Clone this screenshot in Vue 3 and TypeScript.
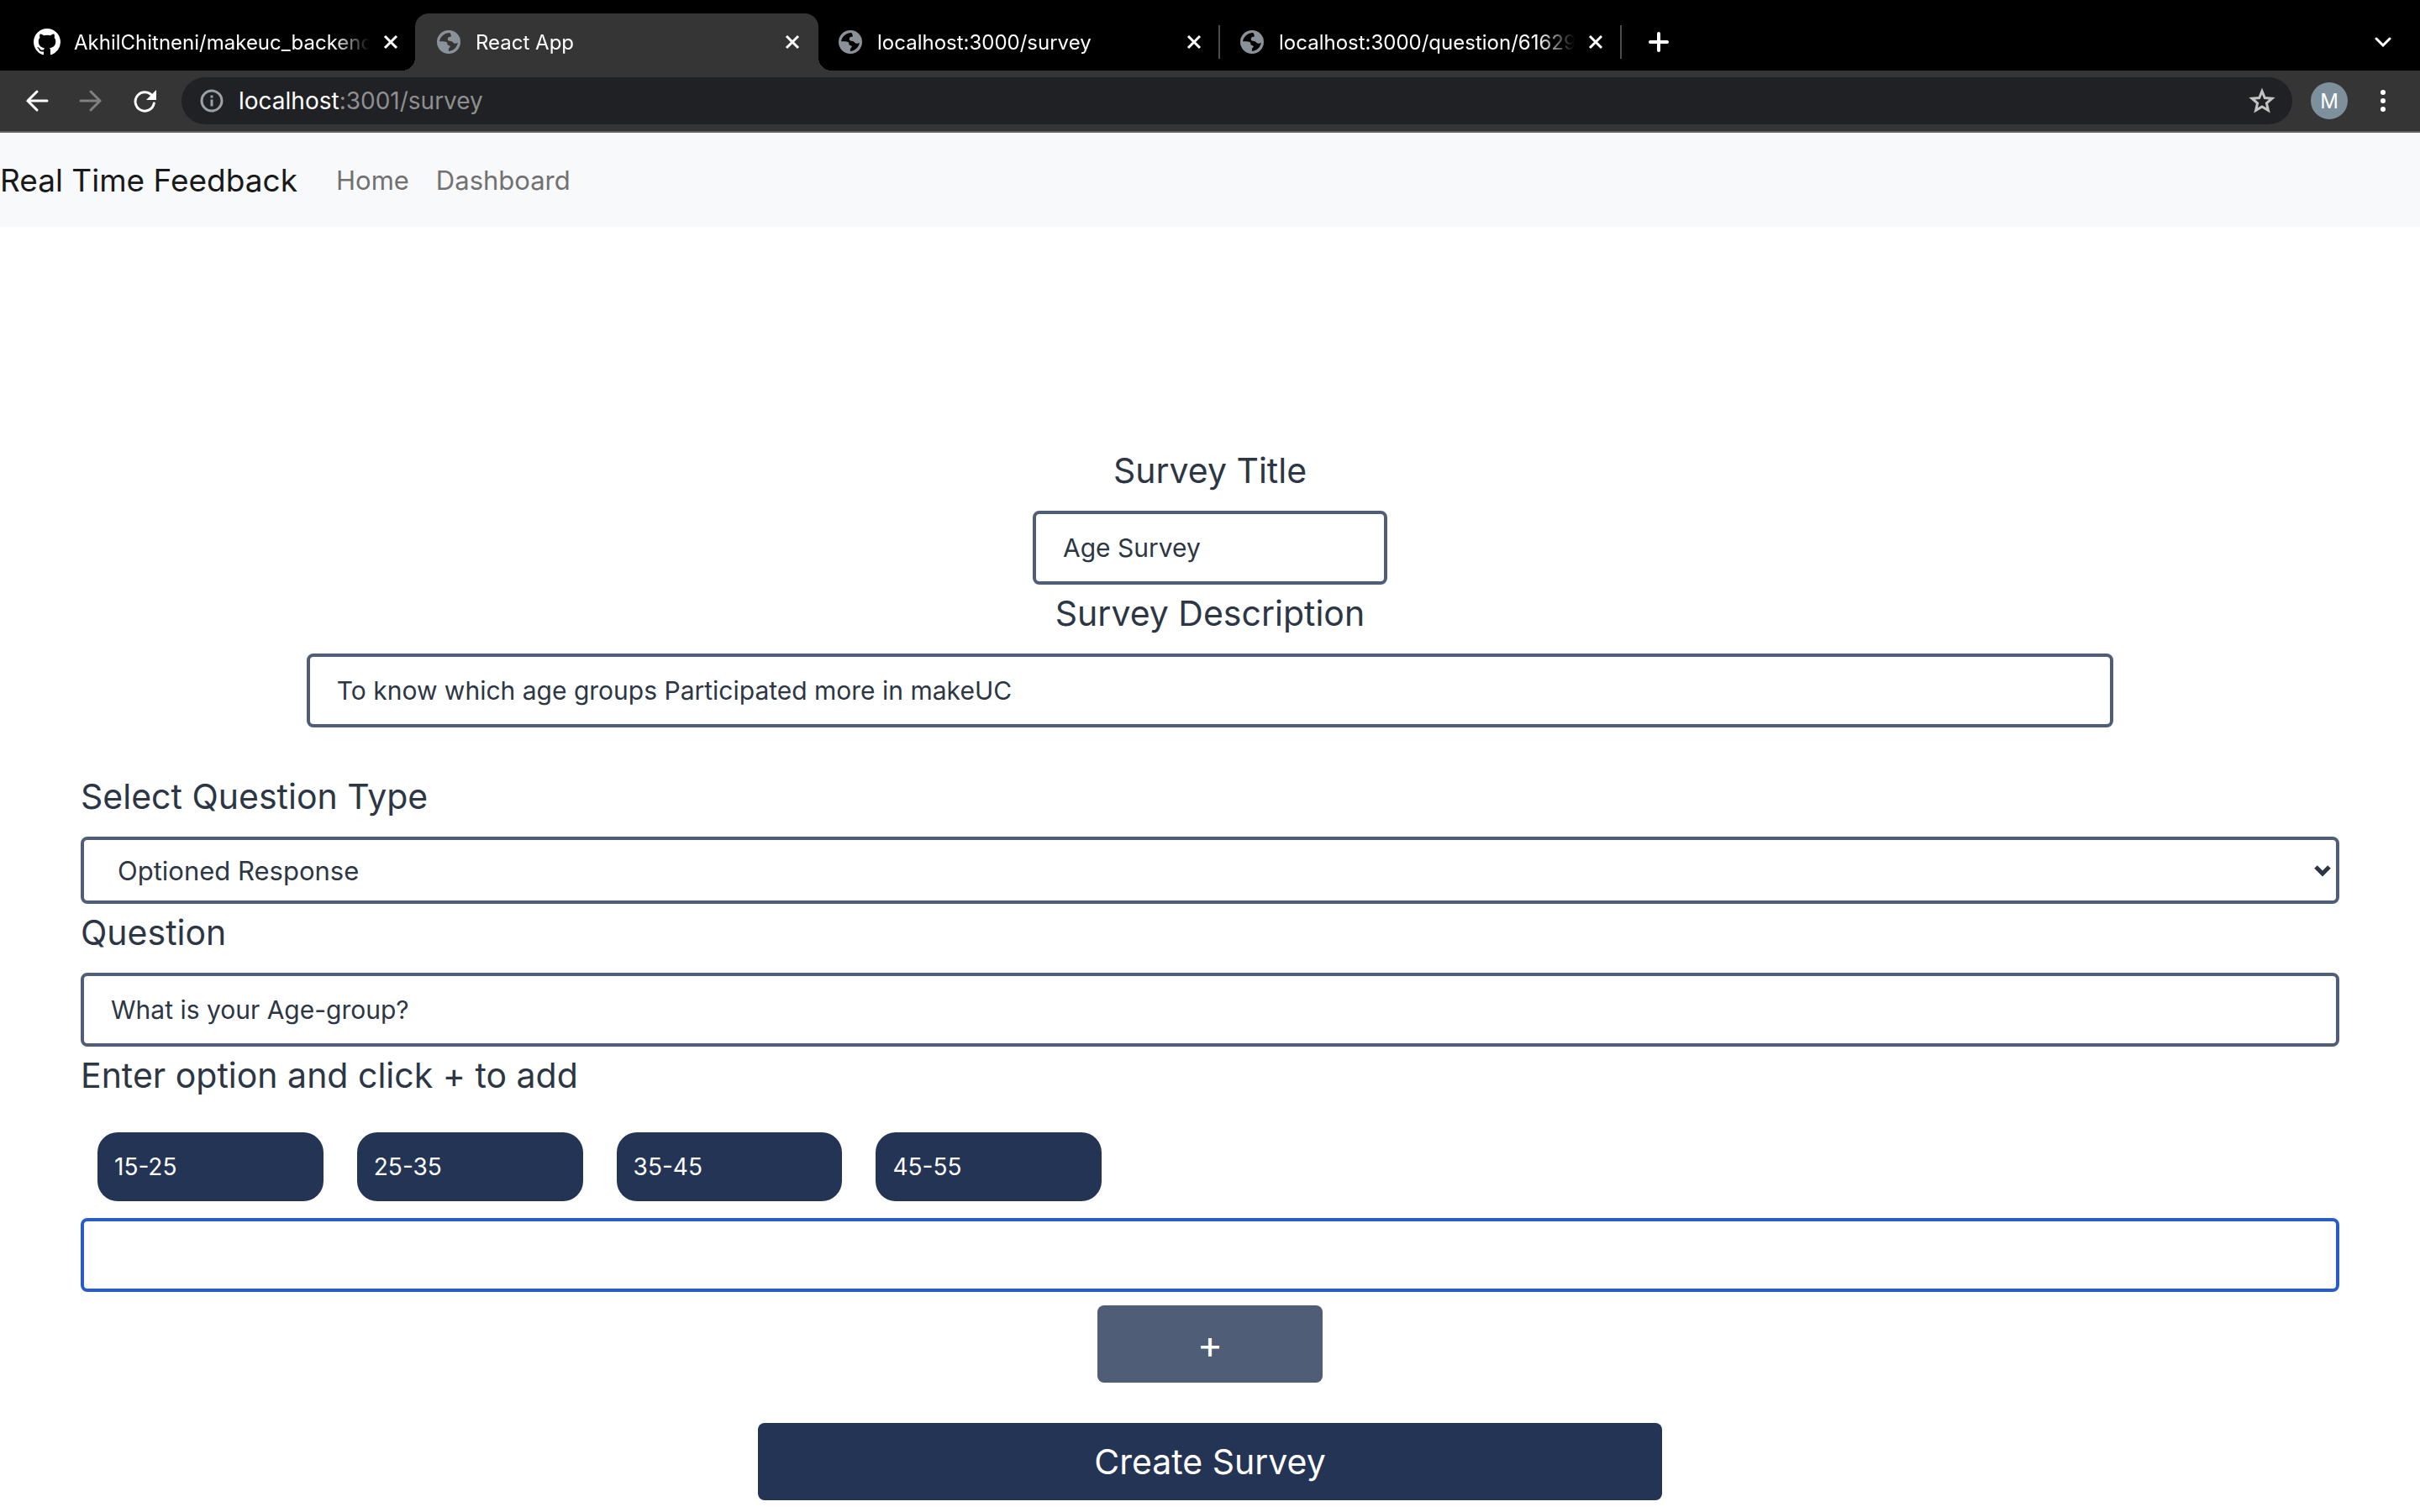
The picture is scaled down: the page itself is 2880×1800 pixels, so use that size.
<script setup lang="ts">
import { ref } from 'vue'

interface Tab {
  title: string
  icon: 'github' | 'globe'
  active?: boolean
  divider?: boolean
}

const tabs: Tab[] = [
  { title: 'AkhilChitneni/makeuc_backend', icon: 'github' },
  { title: 'React App', icon: 'globe', active: true },
  { title: 'localhost:3000/survey', icon: 'globe', divider: true },
  { title: 'localhost:3000/question/61629', icon: 'globe', divider: true },
]

const surveyTitle = ref('Age Survey')
const description = ref('To know which age groups Participated more in makeUC')
const questionType = ref('optioned')
const question = ref('What is your Age-group?')
const options = ref(['15-25', '25-35', '35-45', '45-55'])
const newOption = ref('')

function addOption() {
  const value = newOption.value.trim()
  if (value) {
    options.value.push(value)
    newOption.value = ''
  }
}
</script>

<template>
  <div class="window">
    <header class="chrome">
      <div class="tab-strip">
        <div
          v-for="tab in tabs"
          :key="tab.title"
          class="tab"
          :class="{ active: tab.active, divider: tab.divider }"
        >
          <span class="favicon">
            <svg v-if="tab.icon === 'github'" width="32" height="32" viewBox="0 0 16 16" fill="#fff">
              <path d="M8 0C3.58 0 0 3.58 0 8c0 3.54 2.29 6.53 5.47 7.59.4.07.55-.17.55-.38 0-.19-.01-.82-.01-1.49-2.01.37-2.53-.49-2.69-.94-.09-.23-.48-.94-.82-1.13-.28-.15-.68-.52-.01-.53.63-.01 1.08.58 1.23.82.72 1.21 1.87.87 2.33.66.07-.52.28-.87.51-1.07-1.78-.2-3.64-.89-3.64-3.95 0-.87.31-1.59.82-2.15-.08-.2-.36-1.02.08-2.12 0 0 .67-.21 2.2.82.64-.18 1.32-.27 2-.27s1.36.09 2 .27c1.53-1.04 2.2-.82 2.2-.82.44 1.1.16 1.92.08 2.12.51.56.82 1.27.82 2.15 0 3.07-1.87 3.75-3.65 3.95.29.25.54.73.54 1.48 0 1.07-.01 1.93-.01 2.2 0 .21.15.46.55.38A8.01 8.01 0 0 0 16 8c0-4.42-3.58-8-8-8z" />
            </svg>
            <svg v-else width="28" height="28" viewBox="0 0 28 28">
              <circle cx="14" cy="14" r="14" fill="#8b9199" />
              <path
                class="globe-land"
                d="M15.5 3C9 3 4 7.600 3 13.200c3.500 0 7-.2 8.600 1.100 1.200 1 .4 2.700 1.500 3.400 1 .6 2.600.3 2.700 1.600.1 1.400-1.900 1.700-1.900 3.300v2.300c5.600-.4 10.300-4.800 10.900-10.200-1.100 1.100-2.800 1.300-4.400.7-1.400-.5-1.600-1.800-2.800-2.200-1.600-.5-3.400-.1-4.400-1.200-1-1.200-.3-3.300 1-3.900.9-.4 2 .1 2.500-.8.700-1.200-.8-2.600-1.200-4.300z"
              />
            </svg>
          </span>
          <span class="tab-title">{{ tab.title }}</span>
          <button class="icon-button close" type="button" aria-label="Close tab">
            <svg width="18" height="18" viewBox="0 0 18 18"><path d="M2 2l14 14M16 2L2 16" stroke="#fff" stroke-width="3" /></svg>
          </button>
        </div>
        <button class="icon-button new-tab" type="button" aria-label="New tab">
          <svg width="24" height="24" viewBox="0 0 24 24"><path d="M12 2v20M2 12h20" stroke="#fff" stroke-width="4" stroke-linecap="round" /></svg>
        </button>
        <button class="icon-button tab-search" type="button" aria-label="Search tabs">
          <svg width="20" height="12" viewBox="0 0 20 12"><path d="M2 2l8 8 8-8" fill="none" stroke="#fff" stroke-width="3" stroke-linecap="round" /></svg>
        </button>
      </div>

      <div class="toolbar">
        <div class="nav-buttons">
          <button class="icon-button" type="button" aria-label="Back">
            <svg width="32" height="32" viewBox="0 0 32 32"><path d="M16 5L5 16l11 11M5 16h23" fill="none" stroke="#fff" stroke-width="3" stroke-linecap="round" /></svg>
          </button>
          <button class="icon-button" type="button" aria-label="Forward">
            <svg width="32" height="32" viewBox="0 0 32 32"><path d="M16 5l11 11-11 11M27 16H4" fill="none" stroke="#808080" stroke-width="3" stroke-linecap="round" /></svg>
          </button>
          <button class="icon-button" type="button" aria-label="Reload">
            <svg width="32" height="32" viewBox="0 0 32 32">
              <path d="M25.500 10.500A11.200 11.200 0 1 0 27.300 19" fill="none" stroke="#fff" stroke-width="3" stroke-linecap="round" />
              <path d="M30 3v12H18z" fill="#fff" />
            </svg>
          </button>
        </div>

        <div class="omnibox">
          <svg width="28" height="28" viewBox="0 0 28 28">
            <circle cx="14" cy="14" r="12" fill="none" stroke="#9aa0a6" stroke-width="3" />
            <path d="M14 12.500v8M14 7.500v3" stroke="#9aa0a6" stroke-width="3" />
          </svg>
          <span class="url">localhost<span class="path">:3001/survey</span></span>
          <button class="icon-button" type="button" aria-label="Bookmark this tab">
            <svg width="32" height="32" viewBox="0 0 32 32">
              <path d="M16 4.500l3.300 8 8.700.7-6.600 5.700 2 8.500L16 22.900l-7.400 4.500 2-8.500L4 13.200l8.700-.7z" fill="none" stroke="#c3c3c3" stroke-width="3" />
            </svg>
          </button>
        </div>

        <button class="icon-button avatar" type="button">M</button>
        <button class="icon-button" type="button" aria-label="Menu">
          <svg width="32" height="32" viewBox="0 0 32 32" fill="#fff">
            <circle cx="16" cy="6" r="3" />
            <circle cx="16" cy="16" r="3" />
            <circle cx="16" cy="26" r="3" />
          </svg>
        </button>
      </div>
    </header>

    <nav class="navbar">
      <a class="brand" href="#">Real Time Feedback</a>
      <a class="nav-link" href="#">Home</a>
      <a class="nav-link" href="#">Dashboard</a>
    </nav>

    <main class="content">
      <form @submit.prevent>
        <section class="details">
          <label class="heading" for="survey-title">Survey Title</label>
          <input id="survey-title" v-model="surveyTitle" class="field title-field" type="text" />
          <label class="heading" for="survey-description">Survey Description</label>
          <input id="survey-description" v-model="description" class="field description-field" type="text" />
        </section>

        <section class="question">
          <label class="heading" for="question-type">Select Question Type</label>
          <div class="select-wrap">
            <select id="question-type" v-model="questionType" class="field select-field">
              <option value="optioned">Optioned Response</option>
              <option value="text">Text Response</option>
            </select>
            <svg class="chevron" width="20" height="14" viewBox="0 0 20 14"><path d="M2 2l8 8 8-8" fill="none" stroke="#2d3644" stroke-width="5" /></svg>
          </div>
          <label class="heading" for="question-text">Question</label>
          <input id="question-text" v-model="question" class="field" type="text" />
          <label class="heading" for="new-option">Enter option and click + to add</label>
          <ul class="chips">
            <li v-for="option in options" :key="option" class="chip">{{ option }}</li>
          </ul>
          <input id="new-option" v-model="newOption" class="field current" type="text" />
        </section>

        <div class="actions">
          <button class="button add" type="button" @click="addOption">+</button>
          <button class="button create" type="submit">Create Survey</button>
        </div>
      </form>
    </main>
  </div>
</template>

<style>
body {
  margin: 0;
  background: #fff;
}
</style>

<style scoped>
.window,
.window * {
  box-sizing: border-box;
}

.window {
  font-family: Inter, "Liberation Sans", sans-serif;
  color: #2d3644;
}

button,
input,
select {
  font-family: inherit;
}

.icon-button {
  display: flex;
  align-items: center;
  justify-content: center;
  flex: none;
  padding: 0;
  border: 0;
  background: none;
}

svg {
  display: block;
  flex: none;
}

/* Browser tabs */
.tab-strip {
  display: flex;
  align-items: center;
  height: 84px;
  padding: 16px 34px 0 16px;
  background: #000;
}

.tab {
  position: relative;
  display: flex;
  align-items: center;
  width: 480px;
  height: 68px;
  margin-right: -2px;
  padding: 0 22px 0 24px;
  font-size: 24px;
  color: #fff;
}

.tab.active {
  z-index: 1;
  border-radius: 16px 16px 0 0;
  background: #353535;
}

.tab.active::before,
.tab.active::after {
  content: "";
  position: absolute;
  bottom: 0;
  width: 16px;
  height: 16px;
}

.tab.active::before {
  right: 100%;
  background: radial-gradient(circle at 0 0, transparent 16px, #353535 16px);
}

.tab.active::after {
  left: 100%;
  background: radial-gradient(circle at 100% 0, transparent 16px, #353535 16px);
}

.tab.divider::after {
  content: "";
  position: absolute;
  right: 0;
  top: 14px;
  width: 2px;
  height: 40px;
  background: #4c4c4c;
}

.favicon {
  display: flex;
  justify-content: center;
  width: 32px;
  margin-right: 16px;
}

.globe-land {
  fill: #000;
}

.tab.active .globe-land {
  fill: #353535;
}

.tab-title {
  flex: 1;
  min-width: 0;
  margin-right: 16px;
  overflow: hidden;
  white-space: nowrap;
  mask-image: linear-gradient(to right, #000 calc(100% - 44px), transparent);
}

.new-tab {
  margin-left: 34px;
}

.tab-search {
  margin-left: auto;
}

/* Browser toolbar */
.toolbar {
  display: flex;
  align-items: center;
  height: 74px;
  padding: 0 28px;
  border-bottom: 2px solid #626262;
  background: #353535;
}

.nav-buttons {
  display: flex;
  gap: 32px;
  margin-right: 28px;
}

.omnibox {
  display: flex;
  flex: 1;
  align-items: center;
  height: 56px;
  padding: 0 20px 0 22px;
  border-radius: 28px;
  background: #202124;
}

.url {
  flex: 1;
  margin-left: 18px;
  font-size: 28px;
  color: #fff;
}

.path {
  color: #8f8f8f;
}

.avatar {
  width: 44px;
  height: 44px;
  margin: 0 26px 0 22px;
  border-radius: 50%;
  background: #7e909c;
  font-size: 24px;
  color: #fff;
}

/* Page navigation */
.navbar {
  display: flex;
  align-items: center;
  height: 112px;
  background: #f8f9fb;
}

.navbar a {
  text-decoration: none;
}

.brand {
  margin-right: 30px;
  font-size: 37px;
  color: #191919;
}

.nav-link {
  padding: 0 16px;
  font-size: 31px;
  color: #717172;
}

/* Survey form */
.content {
  padding: 256px 96px 14px;
}

.details,
.actions {
  display: flex;
  flex-direction: column;
  align-items: center;
}

.question {
  margin-top: 48px;
}

.details .heading:first-child {
  padding-top: 0;
  margin-top: 8px;
}

.heading {
  display: block;
  padding: 8px 0 22px;
  font-size: 41px;
  line-height: 52px;
}

.field {
  display: block;
  width: 100%;
  height: 88px;
  padding: 0 32px;
  border: 4px solid #4f5d77;
  border-radius: 8px;
  background: #fff;
  font-size: 30px;
  color: inherit;
  outline: none;
}

.title-field {
  width: 422px;
}

.description-field {
  width: 80%;
}

.select-wrap {
  position: relative;
}

.select-field {
  height: 80px;
  padding: 0 40px;
  appearance: none;
  font-size: 31px;
}

.chevron {
  position: absolute;
  right: 10px;
  top: 34px;
  pointer-events: none;
}

.current {
  border-color: #275dc5;
}

.chips {
  display: flex;
  flex-wrap: wrap;
  margin: 0;
  padding: 0;
  list-style: none;
}

.chip {
  width: 10%;
  height: 82px;
  margin: 20px;
  padding-left: 20px;
  border-radius: 24px;
  background: #243454;
  font-size: 28px;
  line-height: 82px;
  color: #fff;
}

.button {
  height: 92px;
  padding: 0;
  border: 0;
  border-radius: 8px;
  font-size: 41px;
  color: #fff;
}

.add {
  width: 10%;
  margin: 16px 0 48px;
  background: #4f5d77;
  font-size: 46px;
}

.create {
  width: 40%;
  background: #243454;
}
</style>
